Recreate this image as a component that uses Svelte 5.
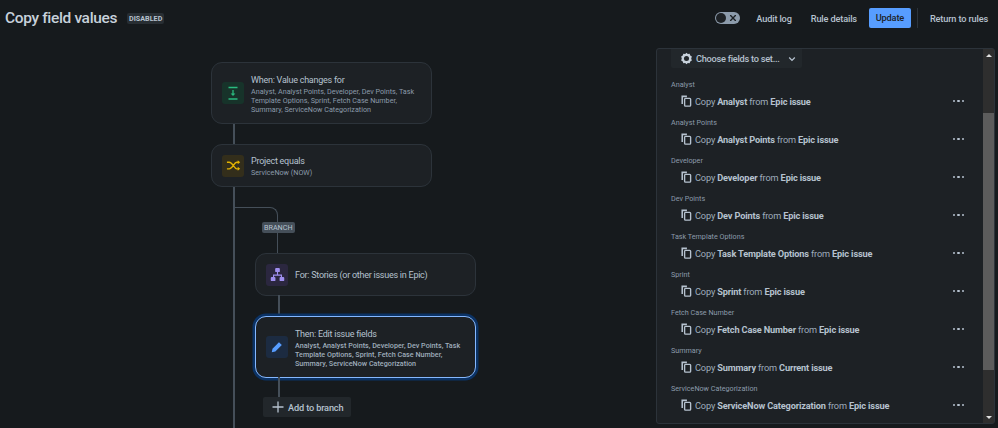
<script lang="ts">
  const triggerFields = 'Analyst, Analyst Points, Developer, Dev Points, Task Template Options, Sprint, Fetch Case Number, Summary, ServiceNow Categorization';

  const fields = [
    { name: 'Analyst', source: 'Epic issue' },
    { name: 'Analyst Points', source: 'Epic issue' },
    { name: 'Developer', source: 'Epic issue' },
    { name: 'Dev Points', source: 'Epic issue' },
    { name: 'Task Template Options', source: 'Epic issue' },
    { name: 'Sprint', source: 'Epic issue' },
    { name: 'Fetch Case Number', source: 'Epic issue' },
    { name: 'Summary', source: 'Current issue' },
    { name: 'ServiceNow Categorization', source: 'Epic issue' },
  ];
</script>

<div class="page">
  <header class="top">
    <div class="title-wrap">
      <h1>Copy field values</h1>
      <span class="lozenge">DISABLED</span>
    </div>
    <div class="actions">
      <span class="toggle">
        <span class="knob"></span>
        <svg viewBox="0 0 10 10" width="8" height="8"><path d="M2 2l6 6M8 2l-6 6" stroke="#1d2125" stroke-width="1.7" stroke-linecap="round"/></svg>
      </span>
      <span class="link audit">Audit log</span>
      <span class="link details">Rule details</span>
      <span class="primary">Update</span>
      <span class="divider"></span>
      <span class="link last">Return to rules</span>
    </div>
  </header>

  <main class="content">
    <section class="flow">
      <div class="rail"></div>
      <div class="card trigger">
        <span class="tile green">
          <svg viewBox="0 0 16 16" width="16" height="16"><path d="M3.5 2.5h9M3.5 14h9" stroke="#2abb7f" stroke-width="1.3"/><path d="M8 5v5" stroke="#2abb7f" stroke-width="1.3"/><path d="M5.6 8.4h4.8L8 11z" fill="#2abb7f"/></svg>
        </span>
        <div class="text">
          <div class="name">When: Value changes for</div>
          <div class="sub">{triggerFields}</div>
        </div>
      </div>
      <div class="card condition">
        <span class="tile yellow">
          <svg viewBox="0 0 16 16" width="15" height="15" fill="none" stroke="#e2b203" stroke-width="1.4"><path d="M1 4.5h2.5c3.5 0 5 7 8 7h2M1 11.5h2.5c3.5 0 5-7 8-7h2"/><path d="M12.5 2.3l2.6 2.2-2.6 2.2zM12.5 9.3l2.6 2.2-2.6 2.2z" fill="#e2b203" stroke="none"/></svg>
        </span>
        <div class="text">
          <div class="name">Project equals</div>
          <div class="sub">ServiceNow (NOW)</div>
        </div>
      </div>

      <div class="branch">
        <div class="elbow"></div>
        <span class="branch-tag">BRANCH</span>
        <div class="card for">
          <span class="tile purple">
            <svg viewBox="0 0 16 16" width="15" height="15" fill="#9f8fef"><rect x="5.5" y="1" width="5" height="4.4" rx="1"/><rect x="0.8" y="10.6" width="5" height="4.4" rx="1"/><rect x="10.2" y="10.6" width="5" height="4.4" rx="1"/><path d="M7.4 5h1.2v3h4.2v3h-1.2V9.2H4.4V11H3.2V8h4.2z"/></svg>
          </span>
          <div class="text"><div class="name">For: Stories (or other issues in Epic)</div></div>
        </div>
        <div class="card then">
          <span class="tile blue">
            <svg viewBox="0 0 16 16" width="12" height="12" fill="#579dff"><path d="M10.6 1.6l3.8 3.8-8.6 8.6-4.8 1 1-4.8z"/></svg>
          </span>
          <div class="text">
            <div class="name">Then: Edit issue fields</div>
            <div class="sub strong">{triggerFields}</div>
          </div>
        </div>
        <div class="add">
          <svg viewBox="0 0 12 12" width="12" height="12"><path d="M6 .5v11M.5 6h11" stroke="#b6c2cf" stroke-width="1.3"/></svg>
          <span>Add to branch</span>
        </div>
      </div>
    </section>

    <aside class="panel">
      <div class="scroll-area">
        <div class="choose">
          <svg viewBox="0 0 16 16" width="13" height="13"><path d="M8 1l1.6 1.6 2.3-.3.7 2.1 2 1.2-.8 2.4.8 2.4-2 1.2-.7 2.1-2.3-.3L8 15l-1.6-1.6-2.3.3-.7-2.1-2-1.2.8-2.4-.8-2.4 2-1.2.7-2.1 2.3.3z" fill="#c7d1db"/><circle cx="8" cy="8" r="3.1" fill="#22272b"/></svg>
          <span>Choose fields to set...</span>
          <svg class="chev" viewBox="0 0 10 10" width="8" height="8"><path d="M1.5 3.2L5 6.8l3.5-3.6" fill="none" stroke="#b6c2cf" stroke-width="1.6"/></svg>
        </div>
        {#each fields as f}
          <div class="field">
            <div class="field-label">{f.name}</div>
            <div class="field-row">
              <svg viewBox="0 0 12 14" width="11" height="12" fill="none" stroke="#b6c2cf"><path d="M1 10.5V1.6h5.5" stroke-width="1.8"/><rect x="3.8" y="4" width="7" height="9" rx="1" stroke-width="1.6"/></svg>
              <span class="copy">Copy <b>{f.name}</b> from <b>{f.source}</b></span>
              <span class="dots"><i></i><i></i><i></i></span>
            </div>
          </div>
        {/each}
      </div>
      <div class="scrollbar">
        <span class="arrow up"></span>
        <div class="track"><div class="thumb"></div></div>
        <span class="arrow down"></span>
      </div>
    </aside>
  </main>
</div>

<style>
  :global(body) {
    margin: 0;
    background: #161a1d;
  }

  .page {
    width: 998px;
    height: 428px;
    overflow: hidden;
    background: #161a1d;
    color: #b6c2cf;
    font-family: Roboto, "Noto Sans", sans-serif;
  }

  .top {
    height: 48px;
    display: flex;
    align-items: flex-start;
    justify-content: space-between;
    box-sizing: border-box;
    padding: 8px 10px 0 5px;
  }

  .title-wrap {
    display: flex;
    align-items: center;
    height: 21px;
  }

  h1 {
    margin: 0;
    font-size: 15.5px;
    letter-spacing: -0.35px;
    line-height: 21px;
    font-weight: 500;
    color: #c7d1db;
  }

  .lozenge {
    margin-left: 10px;
    padding: 0 2px;
    height: 11px;
    line-height: 11px;
    background: #282e33;
    border-radius: 2px;
    font-size: 7.2px;
    font-weight: 700;
    color: #b6c2cf;
  }

  .actions {
    display: flex;
    align-items: center;
    height: 20px;
  }

  .toggle {
    width: 25px;
    height: 12px;
    box-sizing: border-box;
    display: flex;
    align-items: center;
    justify-content: space-between;
    padding: 0 3px 0 1px;
    border-radius: 6px;
    background: #8c9bab;
    margin-right: 16px;
  }

  .knob {
    width: 10px;
    height: 10px;
    border-radius: 50%;
    background: #1d2125;
  }

  .link {
    font-size: 9.2px;
    letter-spacing: -0.15px;
    font-weight: 500;
    color: #b6c2cf;
    white-space: nowrap;
  }

  .audit {
    margin-right: 19px;
  }

  .details {
    margin-right: 12px;
  }

  .primary {
    width: 42px;
    height: 20px;
    line-height: 20px;
    text-align: center;
    font-size: 9.2px;
    letter-spacing: -0.15px;
    font-weight: 500;
    color: #1d2125;
    background: #579dff;
    border-radius: 2px;
  }

  .divider {
    width: 1px;
    height: 20px;
    background: #2c333a;
    margin: 0 12px 0 6px;
  }

  .content {
    display: flex;
    height: 380px;
  }

  .flow {
    position: relative;
    width: 656px;
    box-sizing: border-box;
    padding: 14px 0 0 211px;
  }

  .rail {
    position: absolute;
    left: 233px;
    top: 29px;
    bottom: 0;
    width: 1.5px;
    background: #454f59;
  }

  .card {
    position: relative;
    width: 221px;
    box-sizing: border-box;
    display: flex;
    align-items: center;
    gap: 7px;
    padding: 0 10px;
    background: #1d2125;
    border: 1px solid #2c333a;
    border-radius: 11px;
  }

  .text {
    padding-top: 2px;
  }

  .for .text {
    padding-top: 0;
  }

  .trigger {
    height: 62px;
    margin-bottom: 20px;
  }

  .condition {
    height: 43px;
  }

  .for {
    height: 43px;
    margin-bottom: 20px;
  }

  .then {
    height: 62px;
    border: 1.5px solid #85b8ff;
    box-shadow: 0 0 0 2.5px #0b3264;
  }

  .tile {
    flex: none;
    width: 22px;
    height: 22px;
    border-radius: 3px;
    display: flex;
    align-items: center;
    justify-content: center;
  }

  .green { background: #17332a; }
  .yellow { background: #332e1b; }
  .purple { background: #2b273f; }
  .blue { background: #1c2b41; }

  .name {
    font-size: 9px;
    letter-spacing: -0.25px;
    line-height: 12px;
    color: #b6c2cf;
    white-space: nowrap;
  }

  .sub {
    margin-top: 1px;
    font-size: 7.2px;
    line-height: 9.3px;
    color: #8c9bab;
  }

  .sub.strong {
    font-weight: 500;
    color: #9fadbc;
  }

  .branch {
    position: relative;
    padding: 66px 0 0 44px;
  }

  .elbow {
    position: absolute;
    left: 23px;
    top: 20px;
    width: 44px;
    height: 46px;
    box-sizing: border-box;
    border-top: 1.5px solid #454f59;
    border-right: 1.5px solid #454f59;
    border-top-right-radius: 8px;
  }

  .branch-tag {
    position: absolute;
    left: 51px;
    top: 35px;
    height: 11px;
    line-height: 11px;
    padding: 0 2px;
    background: #454f59;
    border-radius: 2px;
    font-size: 7.2px;
    color: #b6c2cf;
  }

  .for::after,
  .then::after {
    content: "";
    position: absolute;
    left: 22px;
    top: 100%;
    width: 1.5px;
    height: 20px;
    background: #454f59;
  }

  .add {
    position: relative;
    width: 88px;
    height: 20px;
    margin: 19px 0 0 8px;
    box-sizing: border-box;
    display: flex;
    align-items: center;
    gap: 4px;
    padding-left: 9px;
    background: #22272b;
    border-radius: 2px;
    font-size: 9.2px;
    letter-spacing: -0.15px;
    font-weight: 500;
    color: #b6c2cf;
    white-space: nowrap;
  }

  .add svg,
  .choose svg,
  .field-row svg {
    flex: none;
  }

  .panel {
    width: 339px;
    height: 376px;
    box-sizing: border-box;
    display: flex;
    background: #1d2125;
    border: 1px solid #2c333a;
    border-radius: 3px;
  }

  .scroll-area {
    flex: 1;
    padding: 0 14px;
    overflow: hidden;
  }

  .choose {
    width: 131px;
    height: 19px;
    box-sizing: border-box;
    display: flex;
    align-items: center;
    gap: 3px;
    padding-left: 9px;
    background: #22272b;
    border-radius: 0 0 2px 2px;
    font-size: 9.2px;
    letter-spacing: -0.25px;
    font-weight: 500;
    color: #b6c2cf;
    white-space: nowrap;
  }

  .chev {
    margin-left: 5px;
  }

  .field {
    height: 38px;
  }

  .choose + .field {
    margin-top: 11px;
  }

  .field-label {
    height: 11px;
    line-height: 11px;
    font-size: 7.2px;
    color: #8c9bab;
  }

  .field-row {
    height: 22px;
    display: flex;
    align-items: center;
    padding-left: 10px;
    gap: 3px;
  }

  .copy {
    flex: 1;
    font-size: 9.2px;
    letter-spacing: -0.15px;
    color: #9fadbc;
    white-space: nowrap;
  }

  .copy b {
    font-weight: 700;
    color: #b6c2cf;
  }

  .dots {
    display: flex;
    gap: 2px;
    margin-right: 5px;
  }

  .dots i {
    width: 2.5px;
    height: 2.5px;
    border-radius: 50%;
    background: #b6c2cf;
  }

  .scrollbar {
    flex: none;
    width: 11px;
    display: flex;
    flex-direction: column;
    background: #2e2e2e;
  }

  .arrow {
    flex: none;
    height: 12px;
    display: flex;
    align-items: center;
    justify-content: center;
  }

  .arrow::before {
    content: "";
    border-left: 3px solid transparent;
    border-right: 3px solid transparent;
  }

  .up::before { border-bottom: 3px solid #e0e0e0; }
  .down::before { border-top: 3px solid #e0e0e0; }

  .track {
    flex: 1;
    padding-top: 52px;
    box-sizing: border-box;
  }

  .thumb {
    height: 257px;
    background: #5c5c5c;
  }
</style>
